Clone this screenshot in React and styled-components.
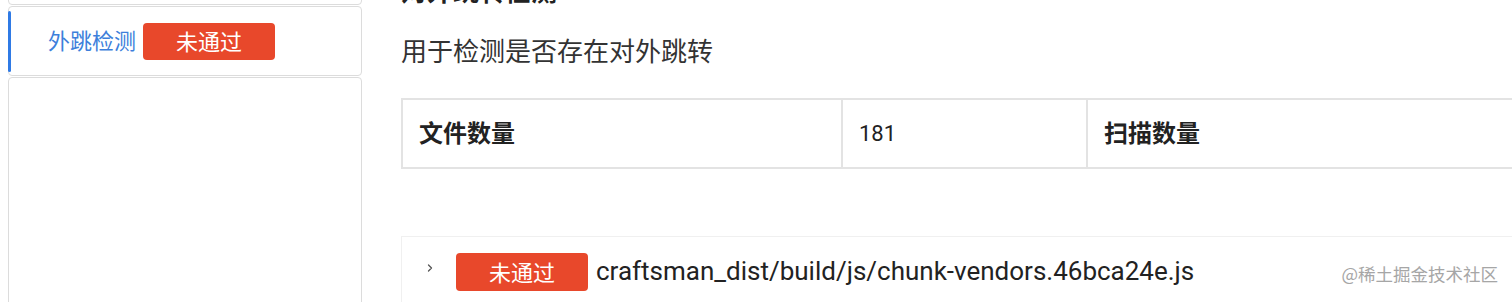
import React from 'react';
import styled, { createGlobalStyle } from 'styled-components';

const GlobalStyle = createGlobalStyle`
  html, body {
    margin: 0;
    padding: 0;
    background: #fff;
    overflow: hidden;
  }
  body {
    font-family: Roboto, "Noto Sans CJK SC", sans-serif;
    color: #222;
  }
`;

const StPage = styled.div`
  position: relative;
  display: flex;
  flex-direction: row;
  align-items: flex-start;
  gap: 39px;
  width: 1512px;
  height: 302px;
  padding-left: 8px;
  box-sizing: border-box;
  overflow: hidden;
`;

const StSideMenu = styled.ul`
  list-style: none;
  margin: -65px 0 0 0;
  padding: 0;
  width: 354px;
  flex-shrink: 0;
  display: flex;
  flex-direction: column;
  gap: 1px;
`;

const StMenuItem = styled.li`
  position: relative;
  box-sizing: border-box;
  height: ${(props) => (props.$tall ? '300px' : '70px')};
  border: 1px solid #dcdcdc;
  border-radius: 4px;
  display: flex;
  align-items: flex-start;
  gap: 7px;
  padding: 16px 0 0 39px;

  &::before {
    content: '';
    display: ${(props) => (props.$active ? 'block' : 'none')};
    position: absolute;
    left: -1px;
    top: 4px;
    bottom: 3px;
    width: 3px;
    border-radius: 2px;
    background: #2f7ae5;
  }
`;

const StMenuLabel = styled.span`
  font-family: "Noto Sans CJK SC", sans-serif;
  font-size: 22px;
  line-height: 37px;
  margin-top: -2px;
  color: #3d7fdb;
`;

const StBadge = styled.span`
  display: inline-flex;
  align-items: center;
  justify-content: center;
  flex-shrink: 0;
  box-sizing: border-box;
  width: 132px;
  height: ${(props) => props.$height || '37px'};
  padding-bottom: 3px;
  border-radius: 4px;
  background: #e8482b;
  color: #fff;
  font-family: "Noto Sans CJK SC", sans-serif;
  font-size: 22px;
`;

const StMain = styled.div`
  flex: 1;
  margin-top: -28px;
  display: flex;
  flex-direction: column;
  min-width: 0;
`;

const StTitle = styled.h2`
  margin: 0;
  font-family: "Noto Sans CJK SC", sans-serif;
  font-size: 26px;
  line-height: 36px;
  font-weight: 700;
  color: #222;
`;

const StDesc = styled.p`
  margin: 24px 0 0 0;
  font-family: "Noto Sans CJK SC", sans-serif;
  font-size: 26px;
  line-height: 36px;
  color: #333;
`;

const StTable = styled.table`
  margin-top: 30px;
  border-collapse: collapse;
  table-layout: fixed;
  width: 1370px;
`;

const StCell = styled.td`
  box-sizing: border-box;
  width: ${(props) => props.$width};
  height: 69px;
  border: 2px solid #e3e3e3;
  padding: 0 0 ${(props) => (props.$head ? '5px' : '0')} 16px;
  font-family: ${(props) => (props.$head ? '"Noto Sans CJK SC", sans-serif' : 'Roboto, sans-serif')};
  font-size: ${(props) => (props.$head ? '24px' : '22px')};
  font-weight: ${(props) => (props.$head ? 700 : 400)};
  color: #222;
  vertical-align: middle;
`;

const StCollapse = styled.div`
  margin-top: 67px;
  border-top: 1px solid #f0f0f0;
  border-left: 1px solid #f0f0f0;
  height: 120px;
`;

const StCollapseHeader = styled.div`
  display: flex;
  align-items: center;
  padding: 16px 0 0 24px;
`;

const StArrow = styled.span`
  display: inline-flex;
  width: 30px;
  margin-top: -8px;
  color: #555;
`;

const StFilePath = styled.span`
  margin-left: 8px;
  font-family: Roboto, sans-serif;
  font-size: 26px;
  color: #222;
  white-space: nowrap;
  margin-top: -2px;
`;

const StWatermark = styled.span`
  position: absolute;
  right: 14px;
  bottom: 16px;
  font-family: "Noto Sans CJK SC", sans-serif;
  font-size: 17.5px;
  color: #a6a6a6;
`;

const App = () => {
  return (
    <>
      <GlobalStyle />
      <StPage>
        <StSideMenu>
          <StMenuItem />
          <StMenuItem $active>
            <StMenuLabel>外跳检测</StMenuLabel>
            <StBadge>未通过</StBadge>
          </StMenuItem>
          <StMenuItem $tall />
        </StSideMenu>
        <StMain>
          <StTitle>对外跳转检测</StTitle>
          <StDesc>用于检测是否存在对外跳转</StDesc>
          <StTable>
            <tbody>
              <tr>
                <StCell $head $width="440px">文件数量</StCell>
                <StCell $width="245px">181</StCell>
                <StCell $head $width="440px">扫描数量</StCell>
                <StCell $width="245px">181</StCell>
              </tr>
            </tbody>
          </StTable>
          <StCollapse>
            <StCollapseHeader>
              <StArrow>
                <svg width="8" height="10" viewBox="0 0 8 10" fill="none">
                  <path d="M2.5 2 L5.5 5 L2.5 8" stroke="currentColor" strokeWidth="1.3" strokeLinecap="round" strokeLinejoin="round" />
                </svg>
              </StArrow>
              <StBadge $height="38px">未通过</StBadge>
              <StFilePath>craftsman_dist/build/js/chunk-vendors.46bca24e.js</StFilePath>
            </StCollapseHeader>
          </StCollapse>
        </StMain>
        <StWatermark>@稀土掘金技术社区</StWatermark>
      </StPage>
    </>
  );
};

export default App;
